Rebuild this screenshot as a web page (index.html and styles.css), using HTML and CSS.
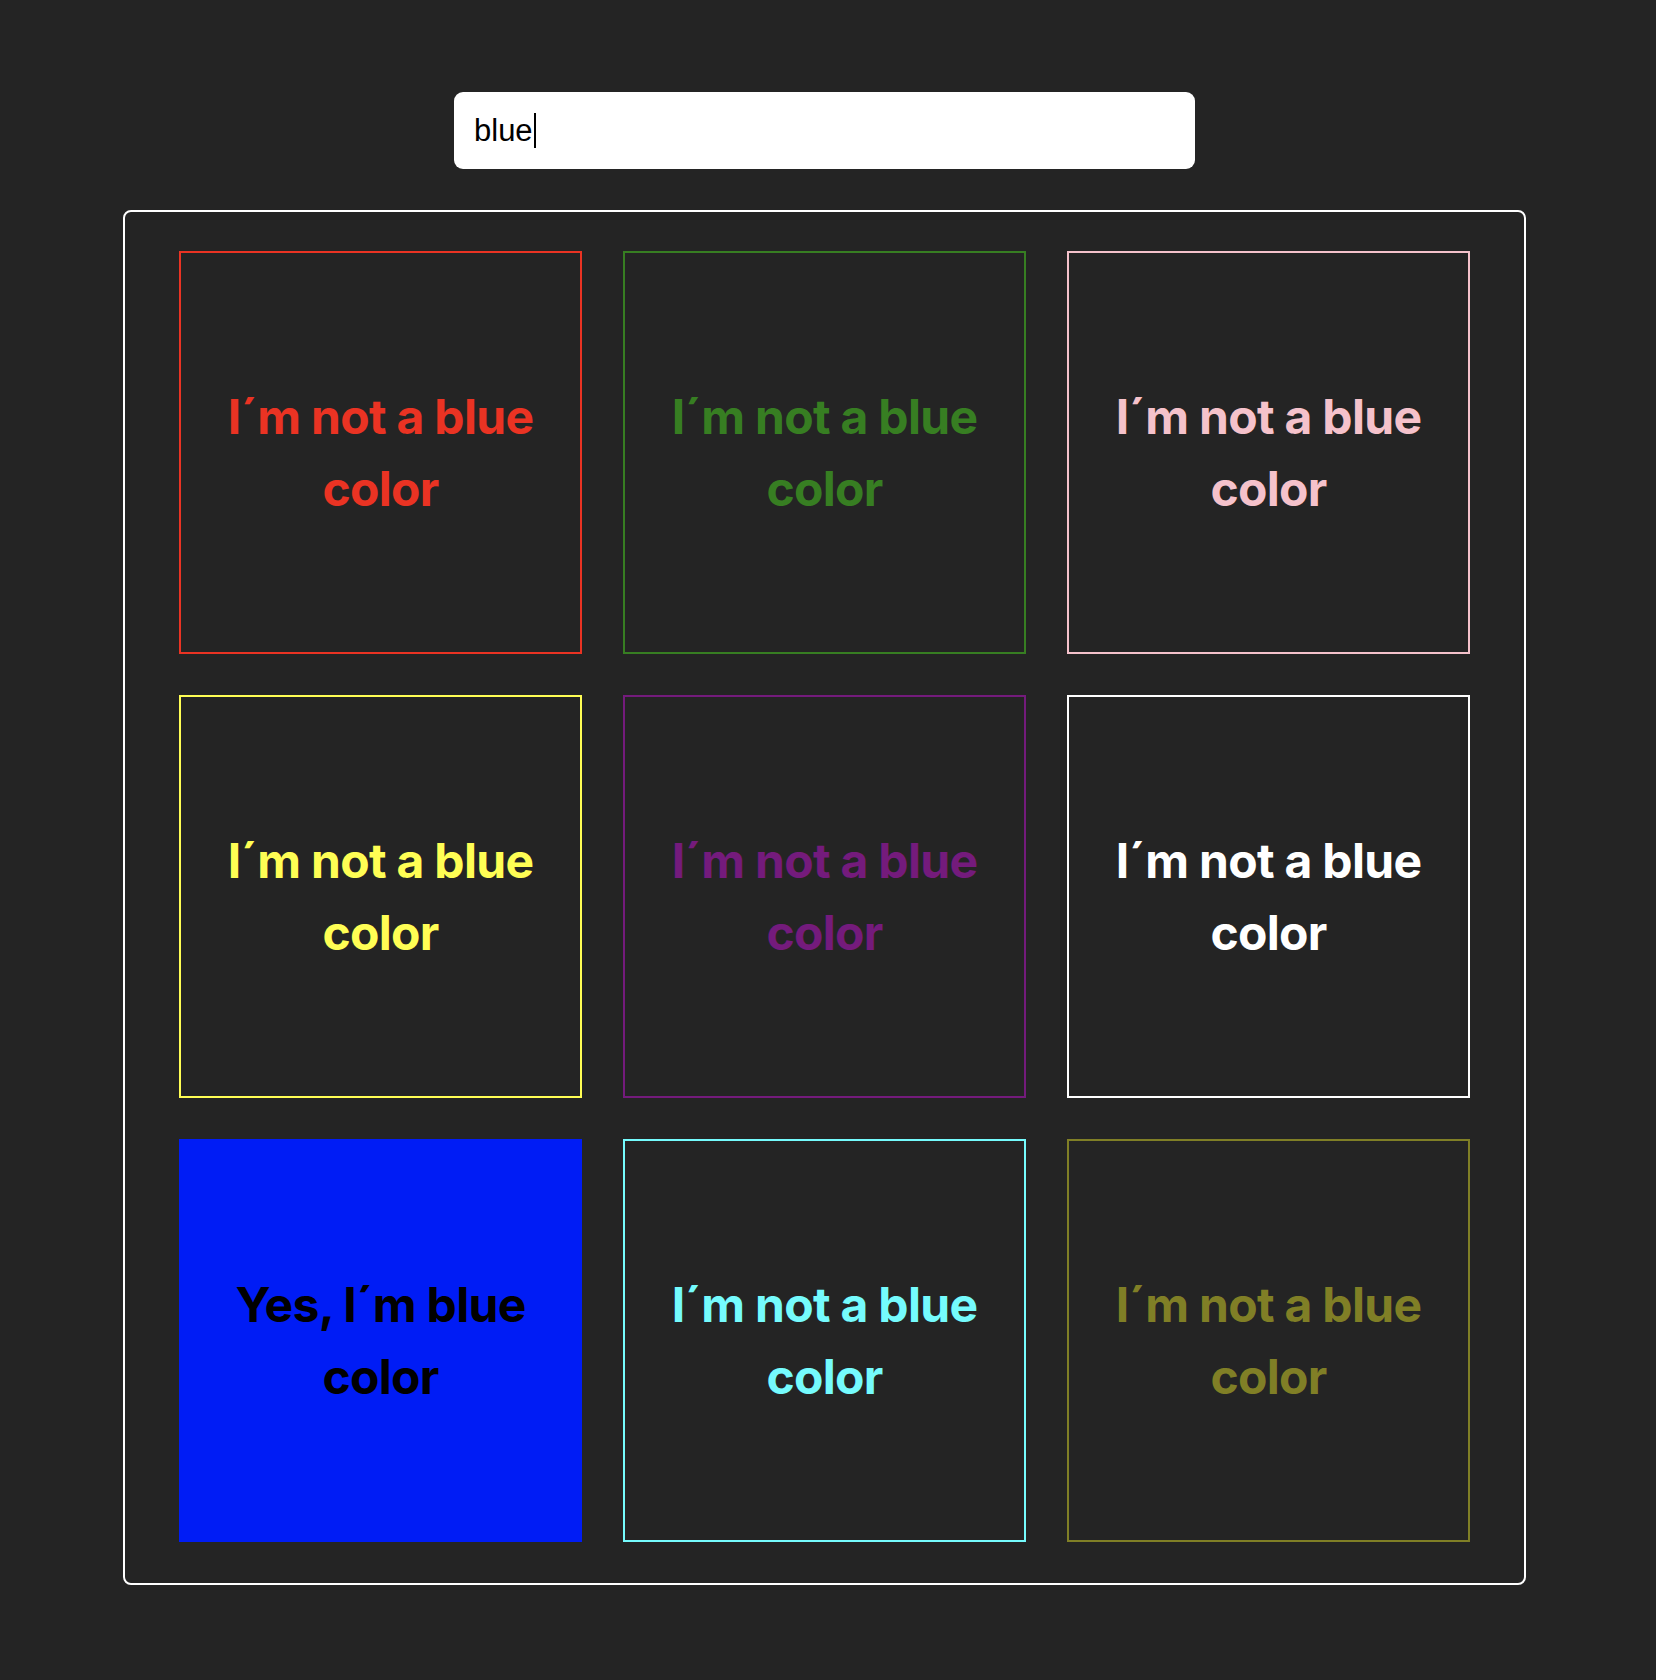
FILE: index.html
```html
<!DOCTYPE html>
<html lang="en">
<head>
<meta charset="utf-8">
<title>Colors</title>
<link rel="stylesheet" href="styles.css">
</head>
<body>
<main class="page">
  <div class="search"><span class="search-text">blue</span><span class="caret"></span></div>
  <section class="board">
    <div class="cell red">I´m not a blue color</div>
    <div class="cell green">I´m not a blue color</div>
    <div class="cell pink">I´m not a blue color</div>
    <div class="cell yellow">I´m not a blue color</div>
    <div class="cell purple">I´m not a blue color</div>
    <div class="cell white">I´m not a blue color</div>
    <div class="cell blue">Yes, I´m blue color</div>
    <div class="cell cyan">I´m not a blue color</div>
    <div class="cell olive">I´m not a blue color</div>
  </section>
</main>
</body>
</html>
```
FILE: styles.css
```css
html, body {
  margin: 0;
  padding: 0;
  background: #242424;
}
.page {
  width: 1649px;
  display: flex;
  flex-direction: column;
  align-items: center;
  padding-top: 92px;
  padding-bottom: 96px;
  gap: 41px;
}
.search {
  box-sizing: border-box;
  width: 741px;
  height: 77px;
  background: #fff;
  border-radius: 9px;
  display: flex;
  align-items: center;
  padding-left: 20px;
  font-family: "Liberation Sans", Arial, sans-serif;
  font-size: 31px;
  color: #000;
}
.caret {
  display: inline-block;
  width: 2px;
  height: 35px;
  background: #000;
  margin-left: 1px;
}
.board {
  box-sizing: border-box;
  width: 1403px;
  border: 2px solid #fff;
  border-radius: 8px;
  padding: 39px 53px 41px 54px;
  display: grid;
  grid-template-columns: repeat(3, 403px);
  grid-auto-rows: 403px;
  column-gap: 41px;
  row-gap: 41px;
}
.cell {
  box-sizing: border-box;
  border: 2px solid currentColor;
  display: flex;
  align-items: center;
  justify-content: center;
  text-align: center;
  padding: 0 30px;
  font-family: Inter, "Noto Sans", sans-serif;
  font-weight: 700;
  font-size: 48px;
  line-height: 72px;
  letter-spacing: -0.7px;
}
.red { color: #ea3323; }
.green { color: #377e22; }
.pink { color: #f5c2cb; }
.yellow { color: #fffe54; }
.purple { color: #741b7c; }
.white { color: #ffffff; }
.cyan { color: #75fbfd; }
.olive { color: #807f26; }
.blue {
  background: #001cf5;
  border-color: #001cf5;
  color: #000;
}
```
